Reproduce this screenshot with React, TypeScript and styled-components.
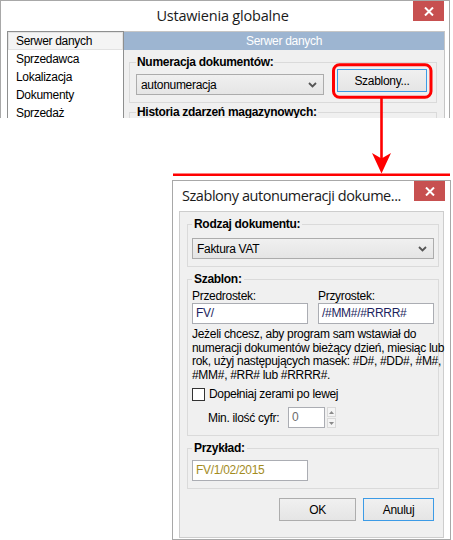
import React from "react";
import styled, { createGlobalStyle } from "styled-components";

const GlobalStyle = createGlobalStyle`
  html, body { margin: 0; padding: 0; background: #ffffff; }
  body {
    font-family: "Liberation Sans", Arial, sans-serif;
    font-size: 12px;
    letter-spacing: -0.3px;
    color: #000;
  }
  *, *::before, *::after { box-sizing: border-box; }
`;

const Page = styled.div`
  position: relative;
  width: 453px;
  height: 540px;
  overflow: hidden;
  background: #fff;
`;

const Window = styled.div`
  background: #ffffff;
  border: 1px solid #a8a8a8;
  display: flex;
  flex-direction: column;
`;

const MainWindow = styled(Window)`
  width: 450px;
  height: 118px;
  border-bottom: none;
  overflow: hidden;
`;

const DialogWindow = styled(Window)`
  width: 279px;
  height: 360px;
  margin: 62px 0 0 172px;
`;

const TitleBar = styled.div<{ $center?: boolean }>`
  height: 30px;
  flex: none;
  display: grid;
  grid-template-columns: ${(p) => (p.$center ? "minmax(0,1fr) auto minmax(0,1fr)" : "minmax(0,1fr) auto")};
  align-items: start;
  padding-right: 5px;
  padding-left: ${(p) => (p.$center ? "0" : "9px")};
`;

const TitleText = styled.div<{ $center?: boolean }>`
  grid-column: ${(p) => (p.$center ? "2" : "1")};
  font-family: "Open Sans", "Noto Sans", sans-serif;
  font-size: 14.5px;
  letter-spacing: ${(p) => (p.$center ? "-0.2px" : "-0.45px")};
  color: #1a1a1a;
  line-height: 30px;
  white-space: nowrap;
`;

const CloseButton = styled.div`
  grid-column: -2;
  justify-self: end;
  width: 31px;
  height: 20px;
  background: #c75050;
  display: flex;
  align-items: center;
  justify-content: center;
`;

const MainClient = styled.div`
  display: flex;
  width: 438px;
  margin-left: 6px;
  flex: 1;
  min-height: 0;
`;

const NavList = styled.div`
  width: 117px;
  flex: none;
  background: #ffffff;
  border: 1px solid #8e8f8f;
  border-bottom: none;
`;

const NavItem = styled.div<{ $selected?: boolean }>`
  height: 18px;
  line-height: 16px;
  padding-left: 7px;
  border: 1px solid ${(p) => (p.$selected ? "#e2e2e2" : "transparent")};
  background: ${(p) => (p.$selected ? "#f4f4f4" : "transparent")};
  white-space: nowrap;
`;

const RightPanel = styled.div`
  flex: 1;
  background: #f0f0f0;
  border-top: 1px solid #c6c6c6;
  border-right: 1px solid #c6c6c6;
  display: flex;
  flex-direction: column;
  padding: 0 7px 0 5px;
`;

const PanelHeader = styled.div`
  height: 18px;
  margin: 0 -7px 0 -5px;
  background: #9db5d1;
  color: #ffffff;
  text-align: center;
  line-height: 18px;
  flex: none;
`;

const Group = styled.fieldset<{ $pad: string; $mt: number }>`
  margin: ${(p) => p.$mt}px 0 0 0;
  border: 1px solid #dadada;
  padding: ${(p) => p.$pad};
  min-width: 0;
  flex: none;
`;

const Legend = styled.legend<{ $pad?: number }>`
  font-weight: bold;
  line-height: 14px;
  padding: 0 ${(p) => p.$pad ?? 2}px;
  white-space: nowrap;
`;

const ControlRow = styled.div`
  display: flex;
  align-items: flex-start;
  gap: 13px;
`;

const Combo = styled.div<{ $w?: number; $mt?: number }>`
  width: ${(p) => (p.$w ? `${p.$w}px` : "auto")};
  height: 21px;
  margin-top: ${(p) => p.$mt ?? 0}px;
  border: 1px solid #acacac;
  background: linear-gradient(#f0f0f0, #e5e5e5);
  display: flex;
  align-items: center;
  justify-content: space-between;
  padding: 0 6px 0 4px;
`;

const PushButton = styled.div<{ $w: number; $focus?: boolean }>`
  width: ${(p) => p.$w}px;
  height: 23px;
  border: 1px solid ${(p) => (p.$focus ? "#3c9be6" : "#adadad")};
  background: linear-gradient(#f0f0f0, #e5e5e5);
  display: flex;
  align-items: center;
  justify-content: center;
  color: #000;
`;

const DialogClient = styled.div`
  flex: 1;
  margin: 0 6px 1px 6px;
  border: 1px solid #cdcdcd;
  background: #f0f0f0;
  padding: 5px 4px 0 7px;
  display: flex;
  flex-direction: column;
`;

const TwoCols = styled.div`
  display: grid;
  grid-template-columns: 116px 116px;
  column-gap: 10px;
`;

const Field = styled.div`
  display: flex;
  flex-direction: column;
`;

const Label = styled.div`
  line-height: 14px;
  white-space: nowrap;
`;

const TextInput = styled.div<{ $w?: number; $color?: string }>`
  width: ${(p) => (p.$w ? `${p.$w}px` : "100%")};
  height: 21px;
  background: #ffffff;
  border: 1px solid #abadb3;
  padding-left: 3px;
  line-height: 19px;
  color: ${(p) => p.$color ?? "#1c1f5e"};
  white-space: nowrap;
`;

const Help = styled.p`
  margin: 4px 0 0 0;
  line-height: 13.6px;
  color: #000;
  white-space: nowrap;
`;

const CheckRow = styled.div`
  display: flex;
  align-items: center;
  gap: 4px;
  margin-top: 5px;
  height: 14px;
`;

const CheckBox = styled.div`
  width: 13px;
  height: 13px;
  border: 1px solid #333333;
  background: #ffffff;
`;

const SpinRow = styled.div`
  display: flex;
  align-items: center;
  margin-top: 6px;
  padding-left: 16px;
`;

const SpinLabel = styled.div`
  width: 80px;
  white-space: nowrap;
`;

const Spinner = styled.div`
  width: 9px;
  height: 21px;
  margin-left: 2px;
  display: flex;
  flex-direction: column;
  gap: 1px;
`;

const SpinPart = styled.div`
  flex: 1;
  border: 1px solid #d9d9d9;
  background: #f4f4f4;
  display: flex;
  align-items: center;
  justify-content: center;
`;

const ButtonRow = styled.div`
  display: flex;
  justify-content: flex-end;
  gap: 7px;
  margin: 9px 5px 0 0;
`;

const Overlay = styled.svg`
  position: absolute;
  left: 0;
  top: 0;
  pointer-events: none;
`;

const Chevron = () => (
  <svg width="9" height="6" viewBox="0 0 9 6">
    <polyline points="1,1 4.5,4.5 8,1" fill="none" stroke="#555" strokeWidth="1.8" />
  </svg>
);

const CloseX = () => (
  <svg width="10" height="9" viewBox="0 0 10 9">
    <path d="M1 0.5 L9 8.5 M9 0.5 L1 8.5" stroke="#fff" strokeWidth="2" />
  </svg>
);

const Tri = ({ up }: { up?: boolean }) => (
  <svg width="5" height="3" viewBox="0 0 5 3">
    <polygon points={up ? "0,3 5,3 2.5,0" : "0,0 5,0 2.5,3"} fill="#8a8a8a" />
  </svg>
);

export default function App() {
  return (
    <Page>
      <GlobalStyle />
      <MainWindow>
        <TitleBar $center>
          <TitleText $center>Ustawienia globalne</TitleText>
          <CloseButton>
            <CloseX />
          </CloseButton>
        </TitleBar>
        <MainClient>
          <NavList>
            <NavItem $selected>Serwer danych</NavItem>
            <NavItem>Sprzedawca</NavItem>
            <NavItem>Lokalizacja</NavItem>
            <NavItem>Dokumenty</NavItem>
            <NavItem>Sprzedaż</NavItem>
          </NavList>
          <RightPanel>
            <PanelHeader>Serwer danych</PanelHeader>
            <Group $mt={5} $pad="0 6px 7px 6px">
              <Legend $pad={1}>Numeracja dokumentów:</Legend>
              <ControlRow>
                <Combo $w={188} $mt={5}>
                  <span>autonumeracja</span>
                  <Chevron />
                </Combo>
                <PushButton $w={90} $focus>
                  Szablony...
                </PushButton>
              </ControlRow>
            </Group>
            <Group $mt={2} $pad="0 6px 7px 6px">
              <Legend $pad={1}>Historia zdarzeń magazynowych:</Legend>
            </Group>
          </RightPanel>
        </MainClient>
      </MainWindow>

      <DialogWindow>
        <TitleBar>
          <TitleText>Szablony autonumeracji dokume...</TitleText>
          <CloseButton>
            <CloseX />
          </CloseButton>
        </TitleBar>
        <DialogClient>
          <Group $mt={0} $pad="7px 4px 7px 4px">
            <Legend>Rodzaj dokumentu:</Legend>
            <Combo>
              <span>Faktura VAT</span>
              <Chevron />
            </Combo>
          </Group>
          <Group $mt={5} $pad="3px 4px 7px 4px">
            <Legend>Szablon:</Legend>
            <TwoCols>
              <Field>
                <Label>Przedrostek:</Label>
                <TextInput>FV/</TextInput>
              </Field>
              <Field>
                <Label>Przyrostek:</Label>
                <TextInput>/#MM#/#RRRR#</TextInput>
              </Field>
            </TwoCols>
            <Help>
              Jeżeli chcesz, aby program sam wstawiał do
              <br />
              numeracji dokumentów bieżący dzień, miesiąc lub
              <br />
              rok, użyj następujących masek: #D#, #DD#, #M#,
              <br />
              #MM#, #RR# lub #RRRR#.
            </Help>
            <CheckRow>
              <CheckBox />
              <span>Dopełniaj zerami po lewej</span>
            </CheckRow>
            <SpinRow>
              <SpinLabel>Min. ilość cyfr:</SpinLabel>
              <TextInput $w={37} $color="#6d6d6d">
                0
              </TextInput>
              <Spinner>
                <SpinPart>
                  <Tri up />
                </SpinPart>
                <SpinPart>
                  <Tri />
                </SpinPart>
              </Spinner>
            </SpinRow>
          </Group>
          <Group $mt={5} $pad="5px 4px 7px 4px">
            <Legend>Przykład:</Legend>
            <TextInput $w={116} $color="#a38c1f">
              FV/1/02/2015
            </TextInput>
          </Group>
          <ButtonRow>
            <PushButton $w={77}>OK</PushButton>
            <PushButton $w={71} $focus>
              Anuluj
            </PushButton>
          </ButtonRow>
        </DialogClient>
      </DialogWindow>

      <Overlay width="453" height="540" viewBox="0 0 453 540">
        <rect x="333.5" y="64.8" width="97.5" height="32.5" rx="6" fill="none" stroke="#ff0000" strokeWidth="3" />
        <line x1="381.5" y1="98" x2="381.5" y2="160" stroke="#ff0000" strokeWidth="2.6" />
        <path d="M372 153 L381.5 173.5 L391 153 L381.5 158.5 Z" fill="#ff0000" />
        <line x1="173" y1="174.7" x2="450" y2="174.7" stroke="#ff0000" strokeWidth="2.6" />
      </Overlay>
    </Page>
  );
}
